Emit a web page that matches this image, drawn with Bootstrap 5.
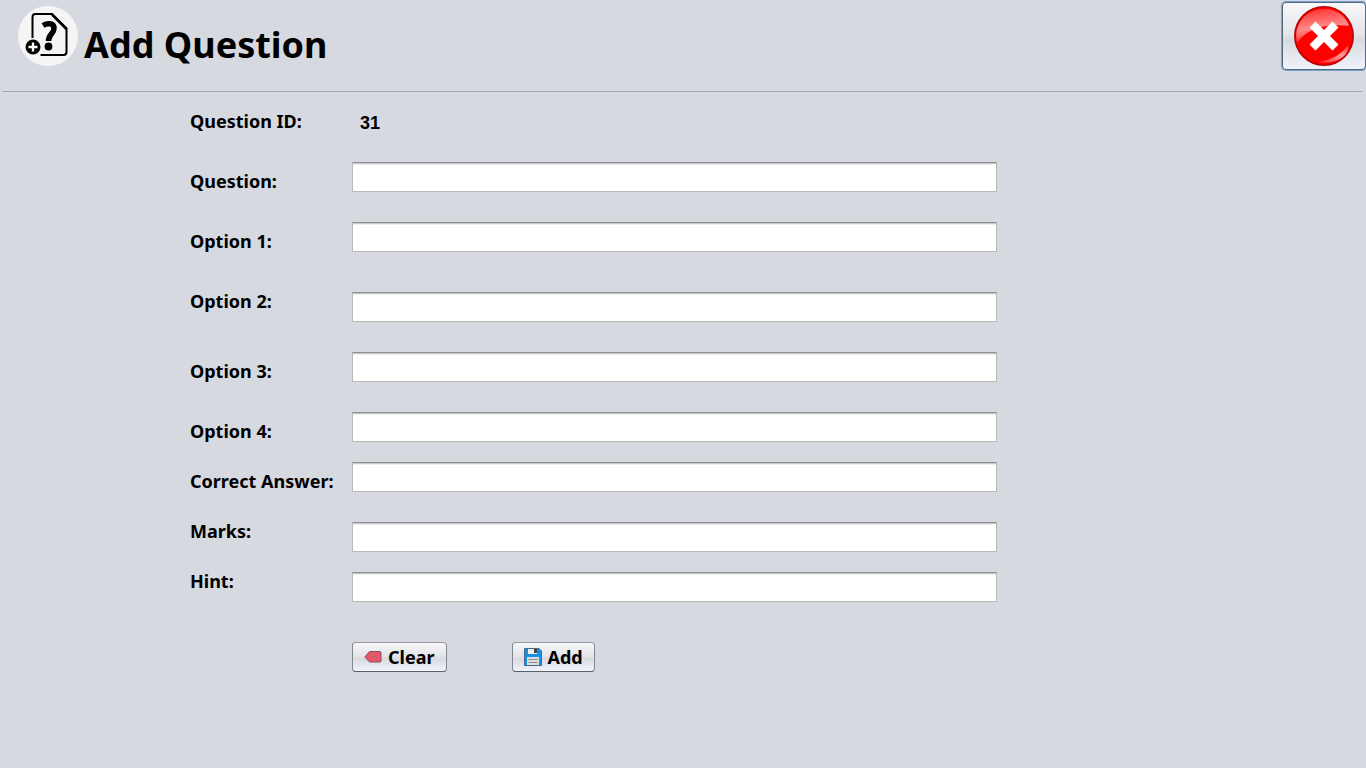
<!DOCTYPE html>
<html lang="en">
<head>
<meta charset="utf-8">
<meta name="viewport" content="width=device-width, initial-scale=1">
<title>Add Question</title>
<link href="https://cdn.jsdelivr.net/npm/bootstrap@5.3.0/dist/css/bootstrap.min.css" rel="stylesheet">
<style>
  body {
    background: #d6d9e0;
    color: #000;
    font-family: Tahoma, "Noto Sans", sans-serif;
    font-size: 18px;
    line-height: 20px;
    font-weight: 700;
  }
  .page-head { height: 91px; padding: 6px 0 0 18px; }
  .page-title { font-size: 36px; line-height: 44px; font-weight: 700; margin: 17px 0 0 6px; }
  .head-rule { height: 1px; background: #a4a7af; margin: 0 4px 0 2px; }
  .question-form { padding: 20px 369px 0 190px; }
  .field-label { width: 162px; flex: none; line-height: 18px; }
  .label-low { padding-top: 10px; }
  .field-row { height: 30px; }
  .gap-s { margin-bottom: 20px; }
  .gap-m { margin-bottom: 30px; }
  .gap-l { margin-bottom: 40px; }
  .id-value { font-family: "Liberation Sans", sans-serif; font-size: 18px; padding-left: 8px; line-height: 22px; }
  .form-control.field-box {
    height: 30px; min-width: 0; border-radius: 0; padding: 2px 6px;
    border: 1px solid #b8b8b8; border-top-color: #8d8e90;
    box-shadow: inset 0 1px #c8c8c8, inset 0 2px #efefef;
    font-size: 18px; background: #fff;
  }
  .nimbus {
    --bs-btn-color: #000; --bs-btn-font-weight: 700; --bs-btn-font-size: 18px; --bs-btn-line-height: 20px;
    --bs-btn-hover-color: #000;
    border: 1px solid #83868c; border-top-color: #96999f; border-bottom-color: #5d6066; border-radius: 4px;
    background: linear-gradient(#f8f8fa, #e2e4e8 48%, #d7dae0 56%, #f0f3fb);
    box-shadow: 0 1px #c3c6cd;
  }
  .action { height: 30px; padding: 0 11px; gap: 6px; }
  .action-pair { gap: 65px; }
  .close-page {
    width: 84px; height: 68px; margin-top: -4px; padding: 0;
    border-color: #55677c; box-shadow: 0 0 0 1px #73a4d1;
  }
</style>
</head>
<body>
<header class="page-head d-flex align-items-start">
  <svg width="60" height="60" viewBox="0 0 60 60" aria-hidden="true">
    <circle cx="30" cy="30" r="30" fill="#f5f5f5"/>
    <path d="M14.500 32V11q0-3 3-3H34L48.500 22.500V46q0 3-3 3H22.500" fill="none" stroke="#000" stroke-width="2"/>
    <path d="M34 8.500L48.500 23" stroke="#000" stroke-width="2.500"/>
    <path d="M25 19.500C29 17 36 16.500 36 22.500C36 28 30.500 28 30.500 35" fill="none" stroke="#000" stroke-width="5.500"/>
    <circle cx="30.500" cy="40.500" r="3.900"/>
    <circle cx="15" cy="41" r="7.500"/>
    <path d="M15 36.500v9M10.500 41h9" stroke="#fff" stroke-width="2.400"/>
  </svg>
  <h1 class="page-title">Add Question</h1>
  <button type="button" class="btn nimbus close-page ms-auto d-flex align-items-center justify-content-center" aria-label="Close">
    <svg width="60" height="60" viewBox="0 0 60 60" aria-hidden="true">
      <defs>
        <linearGradient id="gloss" x1="0.3" y1="0" x2=".5" y2="1">
          <stop offset="0" stop-color="#f33"/><stop offset=".55" stop-color="#ff8a8a"/><stop offset="1" stop-color="#ff2020"/>
        </linearGradient>
        <linearGradient id="shine" x1="0" y1="1" x2="1" y2="0">
          <stop offset="0" stop-color="#f22"/><stop offset=".6" stop-color="#ff9a9a"/><stop offset="1" stop-color="#f33"/>
        </linearGradient>
      </defs>
      <circle cx="30" cy="30" r="29.200" fill="#f00" stroke="#b80000" stroke-width="1.500"/>
      <path d="M3 37C-1 18 12 3 30 3C43 3 52 10 55 20C38 18 15 20 3 37Z" fill="url(#gloss)"/>
      <path d="M24 56C38 54 48 48 54 39C56 50 42 59 24 56Z" fill="url(#shine)"/>
      <path d="M21.500 15.500L30 24l8.500-8.500 6 6L36 30l8.500 8.500-6 6L30 36l-8.500 8.500-6-6L24 30l-8.500-8.500Z" fill="#fff"/>
    </svg>
  </button>
</header>
<div class="head-rule"></div>
<main>
  <form class="question-form" onsubmit="return false">
    <div class="field-row gap-s d-flex align-items-start">
      <label class="field-label" for="question-id">Question ID:</label><output class="id-value" id="question-id">31</output>
    </div>
    <div class="field-row gap-m d-flex align-items-start">
      <label class="field-label label-low" for="question">Question:</label><input class="form-control field-box" id="question" type="text">
    </div>
    <div class="field-row gap-l d-flex align-items-start">
      <label class="field-label label-low" for="option1">Option 1:</label><input class="form-control field-box" id="option1" type="text">
    </div>
    <div class="field-row gap-m d-flex align-items-start">
      <label class="field-label" for="option2">Option 2:</label><input class="form-control field-box" id="option2" type="text">
    </div>
    <div class="field-row gap-m d-flex align-items-start">
      <label class="field-label label-low" for="option3">Option 3:</label><input class="form-control field-box" id="option3" type="text">
    </div>
    <div class="field-row gap-s d-flex align-items-start">
      <label class="field-label label-low" for="option4">Option 4:</label><input class="form-control field-box" id="option4" type="text">
    </div>
    <div class="field-row gap-m d-flex align-items-start">
      <label class="field-label label-low" for="answer">Correct Answer:</label><input class="form-control field-box" id="answer" type="text">
    </div>
    <div class="field-row gap-s d-flex align-items-start">
      <label class="field-label" for="marks">Marks:</label><input class="form-control field-box" id="marks" type="text">
    </div>
    <div class="field-row gap-l d-flex align-items-start">
      <label class="field-label" for="hint">Hint:</label><input class="form-control field-box" id="hint" type="text">
    </div>
    <div class="d-flex align-items-start">
      <span class="field-label"></span>
      <div class="action-pair d-flex">
        <button type="reset" class="btn nimbus action d-flex align-items-center">
          <svg width="18" height="18" viewBox="0 0 18 18" aria-hidden="true">
            <path d="M.8 9L5.500 3.500H16q1 0 1 1V13q0 1-1 1H5.500Z" fill="#ee5468" stroke="#7d5561" stroke-width="1"/>
            <path d="M7.500 6.500l5 5M12.500 6.500l-5 5" stroke="#a57079" stroke-width="1"/>
          </svg>Clear</button>
        <button type="submit" class="btn nimbus action d-flex align-items-center">
          <svg width="18" height="18" viewBox="0 0 18 18" aria-hidden="true">
            <path d="M.5 .5H15L17.500 3V17.500H.5Z" fill="#1590ea" stroke="#4b6a84" stroke-width="1"/>
            <path d="M4 1h9v5H4Z" fill="#eee"/>
            <path d="M10 1h3v4h-3Z" fill="#444"/>
            <path d="M3 9h12v8H3Z" fill="#ddd"/>
            <path d="M4.500 11.500h9M4.500 14.500h9" stroke="#8b8b8b"/>
          </svg>Add</button>
      </div>
    </div>
  </form>
</main>
<script src="https://cdn.jsdelivr.net/npm/bootstrap@5.3.0/dist/js/bootstrap.bundle.min.js"></script>
</body>
</html>
